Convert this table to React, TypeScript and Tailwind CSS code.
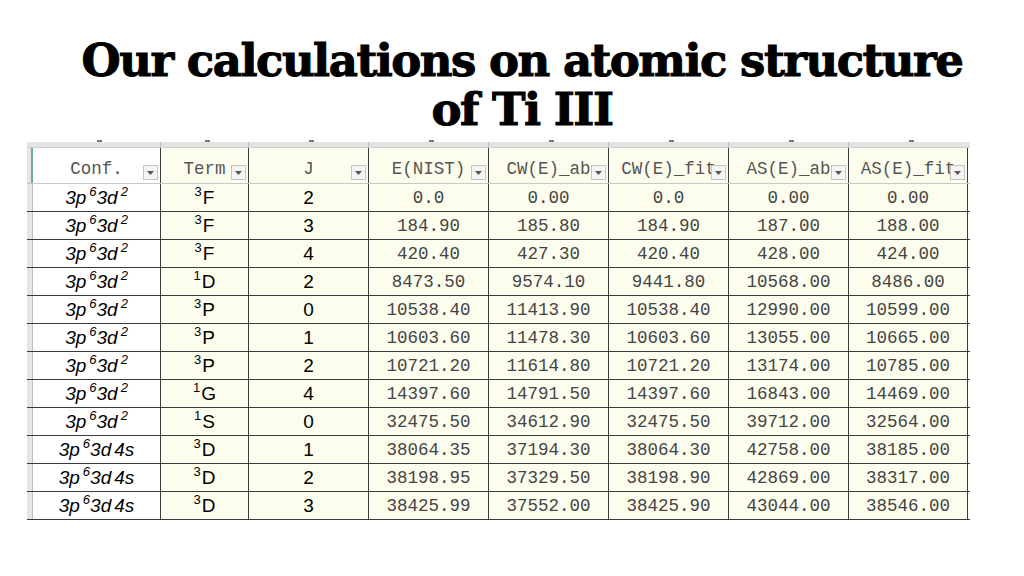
import React from 'react'

type Row = { conf: 'd2' | 'd4s'; term: [string, string]; j: string; vals: string[] }

const rows: Row[] = [
  { conf: 'd2', term: ['3', 'F'], j: '2', vals: ['0.0', '0.00', '0.0', '0.00', '0.00'] },
  { conf: 'd2', term: ['3', 'F'], j: '3', vals: ['184.90', '185.80', '184.90', '187.00', '188.00'] },
  { conf: 'd2', term: ['3', 'F'], j: '4', vals: ['420.40', '427.30', '420.40', '428.00', '424.00'] },
  { conf: 'd2', term: ['1', 'D'], j: '2', vals: ['8473.50', '9574.10', '9441.80', '10568.00', '8486.00'] },
  { conf: 'd2', term: ['3', 'P'], j: '0', vals: ['10538.40', '11413.90', '10538.40', '12990.00', '10599.00'] },
  { conf: 'd2', term: ['3', 'P'], j: '1', vals: ['10603.60', '11478.30', '10603.60', '13055.00', '10665.00'] },
  { conf: 'd2', term: ['3', 'P'], j: '2', vals: ['10721.20', '11614.80', '10721.20', '13174.00', '10785.00'] },
  { conf: 'd2', term: ['1', 'G'], j: '4', vals: ['14397.60', '14791.50', '14397.60', '16843.00', '14469.00'] },
  { conf: 'd2', term: ['1', 'S'], j: '0', vals: ['32475.50', '34612.90', '32475.50', '39712.00', '32564.00'] },
  { conf: 'd4s', term: ['3', 'D'], j: '1', vals: ['38064.35', '37194.30', '38064.30', '42758.00', '38185.00'] },
  { conf: 'd4s', term: ['3', 'D'], j: '2', vals: ['38198.95', '37329.50', '38198.90', '42869.00', '38317.00'] },
  { conf: 'd4s', term: ['3', 'D'], j: '3', vals: ['38425.99', '37552.00', '38425.90', '43044.00', '38546.00'] },
]

const headers = ['Conf.', 'Term', 'J', 'E(NIST)', 'CW(E)_ab', 'CW(E)_fit', 'AS(E)_ab', 'AS(E)_fit']

const grid = 'grid grid-cols-[6px_127px_88px_120px_120px_120px_120px_120px_120px]'
const mono = "font-['Liberation_Mono','Courier_New',monospace]"
const arial = "font-['Liberation_Sans',Arial,sans-serif]"
const cell = 'flex items-center justify-center leading-[20px] overflow-hidden'
const sup = 'text-[13px] leading-none top-[-0.6em]'

const Drop = () => (
  <span className="absolute right-[2px] bottom-[3px] w-[15px] h-[15px] border border-[#c4c4c4] bg-[#f4f4f4] flex items-center justify-center">
    <svg width="7" height="4" viewBox="0 0 7 4"><polygon points="0,0 7,0 3.5,4" fill="#555" /></svg>
  </span>
)

export default function App() {
  return (
    <div className="w-[1024px] h-[576px] bg-white overflow-hidden flex flex-col items-center">
      <h1 className="mt-[36px] ml-[20px] text-center text-[45px] leading-[49px] font-bold text-black tracking-[-1.5px] font-['DejaVu_Serif',serif] [-webkit-text-stroke:1px_black]">
        Our calculations on atomic structure
        <br />
        of Ti III
      </h1>

      <div className="mt-[8px] ml-[-27px] w-[943px] flex flex-col">
        {/* clipped column letter strip */}
        <div className={`${grid} h-[6px] bg-[#e3e3e3] border-b border-[#cfcfcf]`}>
          <div className="bg-[#e3e3e3]" />
          {headers.map((h, i) => (
            <div key={h} className={`relative ${i > 0 ? 'border-l border-[#bdbdbd]' : ''}`}>
              <span className="absolute left-1/2 top-[-2px] w-[5px] h-[2px] bg-[#777]" />
            </div>
          ))}
        </div>

        {/* header row */}
        <div className={`${grid} grid-rows-[35px] h-[36px] border-b border-[#c8c8c8]`}>
          <div className="bg-[#e6e6e6] border-r-2 border-[#6fae93]" />
          {headers.map((h, i) => (
            <div
              key={h}
              className={`relative flex items-end justify-center pb-[4px] ${i === 0 ? 'bg-white' : 'bg-[#fdfdee] border-l border-[#3a3a3a]'} ${i === 7 ? 'border-r' : ''}`}
            >
              <span className={`${mono} text-[17.5px] leading-[20px] text-[#555] whitespace-nowrap overflow-hidden max-w-[102px]`}>{h}</span>
              <Drop />
            </div>
          ))}
        </div>

        {rows.map((r, ri) => (
          <div key={ri} className={`${grid} grid-rows-[27px] h-[28px] border-b border-[#3a3a3a]`}>
            <div className="bg-[#e6e6e6] border-r border-[#c0c0c0]" />
            <div className={`${arial} ${cell} bg-white text-[19px] italic text-black`}>
              <span>
                3p<sup className={`${sup} ml-[3px]`}>6</sup>3d{r.conf === 'd2' ? <sup className={`${sup} ml-[3px]`}>2</sup> : <span className="ml-[3px]">4s</span>}
              </span>
            </div>
            <div className={`${arial} ${cell} bg-[#fdfdee] border-l border-[#3a3a3a] text-[19px] text-black`}>
              <span>
                <sup className={`${sup} mr-[1px]`}>{r.term[0]}</sup>
                {r.term[1]}
              </span>
            </div>
            <div className={`${arial} ${cell} bg-[#fdfdee] border-l border-[#3a3a3a] text-[19px] text-black`}>
              {r.j}
            </div>
            {r.vals.map((v, vi) => (
              <div
                key={vi}
                className={`${mono} ${cell} bg-[#fdfdee] border-l border-[#3a3a3a] ${vi === 4 ? 'border-r' : ''} text-[17.5px] text-[#444]`}
              >
                {v}
              </div>
            ))}
          </div>
        ))}
      </div>
    </div>
  )
}
